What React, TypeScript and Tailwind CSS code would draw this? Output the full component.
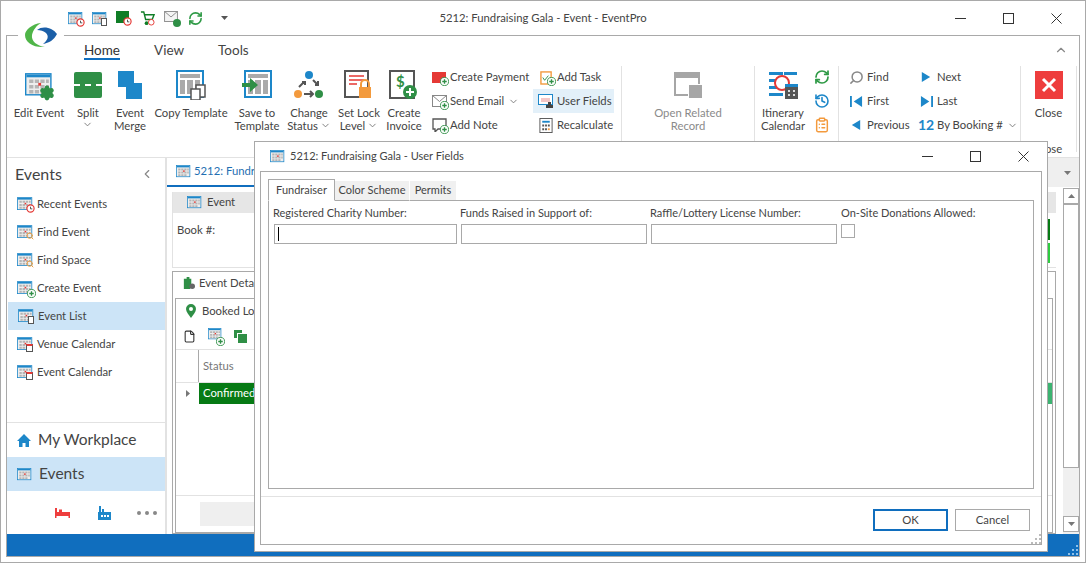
import React from "react";
import { ChevronDown, ChevronUp, ChevronLeft, RefreshCw, History, Search, ClipboardList, File, Settings } from "lucide-react";

function Cal({ size = 20, children }: { size?: number; children?: React.ReactNode }) {
  // small blue framed calendar used all over the app
  return (
    <span className="relative inline-block shrink-0" style={{ width: size, height: size }}>
      <svg viewBox="0 0 20 20" width={size} height={size}>
        <rect x="0.5" y="2" width="18" height="15" fill="#eee" stroke="#1d87c9" />
        <rect x="1" y="2.5" width="17" height="2" fill="#1d87c9" />
        <path d="M3 6h3v2.5H3zM7 6h3v2.5H7zM11 6h3v2.5h-3zM15 6h2v2.5h-2zM3 10h3v2.5H3zM7 10h3v2.5H7zM11 10h3v2.5h-3zM15 10h2v2.5h-2zM3 13.5h3V16H3zM7 13.5h3V16H7zM11 13.5h3V16h-3z" fill="#b5b5b5" />
        <rect x="9.5" y="8.5" width="2" height="2" fill="#e53935" />
      </svg>
      {children}
    </span>
  );
}

function Plus({ className = "" }: { className?: string }) {
  return (
    <svg viewBox="0 0 10 10" className={className} width="9" height="9">
      <circle cx="5" cy="5" r="4.5" fill="#fff" stroke="#2f8f46" />
      <path d="M5 2.5v5M2.5 5h5" stroke="#2f8f46" strokeWidth="1.5" />
    </svg>
  );
}

function Clock({ className = "" }: { className?: string }) {
  return (
    <svg viewBox="0 0 10 10" className={className} width="9" height="9">
      <circle cx="5" cy="5" r="4" fill="#fff" stroke="#e53935" strokeWidth="1.3" />
      <path d="M5 3v2.4h2" stroke="#444" fill="none" />
    </svg>
  );
}

function BigBtn({ label, icon, w }: { label: React.ReactNode; icon: React.ReactNode; w: number }) {
  return (
    <div className="flex flex-col items-center shrink-0 pt-[6px]" style={{ width: w }}>
      <div className="h-[28px] flex items-center justify-center">{icon}</div>
      <div className="mt-[7px] text-center leading-[13px] text-[#444] whitespace-nowrap">{label}</div>
    </div>
  );
}

function SmallBtn({ icon, label, arrow, active, w, pl = 0 }: { icon: React.ReactNode; label: string; arrow?: boolean; active?: boolean; w?: number; pl?: number }) {
  return (
    <div className={"h-[24px] flex items-center gap-[3px] whitespace-nowrap text-[#444] " + (active ? "bg-[#e3f0f9]" : "")} style={{ width: w, paddingLeft: pl }}>
      <span className="w-[16px] h-[16px] flex items-center justify-center shrink-0 relative">{icon}</span>
      {label}
      {arrow && <ChevronDown size={11} className="text-[#777] ml-[1px]" />}
    </div>
  );
}

function Sep() {
  return <div className="w-px bg-[#e2e2e2] h-[75px] shrink-0 mt-[1px]" />;
}

function WinButtons({ box }: { box: number }) {
  return (
    <div className="flex items-center text-[#333]">
      <span className="flex justify-center" style={{ width: box }}><svg width="11" height="11"><path d="M0 5.5h11" stroke="currentColor" /></svg></span>
      <span className="flex justify-center" style={{ width: box }}><svg width="11" height="11"><rect x=".5" y=".5" width="10" height="10" fill="none" stroke="currentColor" /></svg></span>
      <span className="flex justify-center" style={{ width: box }}><svg width="11" height="11"><path d="M.5 .5l10 10M10.5 .5l-10 10" stroke="currentColor" /></svg></span>
    </div>
  );
}

function Grip({ className = "", color = "#bbb" }: { className?: string; color?: string }) {
  return (
    <svg width="10" height="10" className={className}>
      <path d="M8 0h2v2H8zM4 4h2v2H4zM8 4h2v2H8zM0 8h2v2H0zM4 8h2v2H4zM8 8h2v2H8z" fill={color} />
    </svg>
  );
}

const navItems = ["Recent Events", "Find Event", "Find Space", "Create Event", "Event List", "Venue Calendar", "Event Calendar"];

function NavIcon({ name }: { name: string }) {
  return (
    <Cal size={16}>
      {name === "Recent Events" && <Clock className="absolute right-[-2px] bottom-[-1px]" />}
      {(name === "Find Event" || name === "Find Space") && <Search size={8} strokeWidth={3} className="absolute right-[-1px] bottom-0 text-[#f0a040]" />}
      {name === "Create Event" && <Plus className="absolute right-[-3px] bottom-[-2px]" />}
      {name === "Event List" && <span className="absolute right-0 bottom-0 w-[6px] h-[8px] bg-white border border-[#555]" />}
      {(name === "Venue Calendar" || name === "Event Calendar") && <span className="absolute right-0 bottom-0 w-[7px] h-[8px] bg-white border border-[#555] border-t-2 border-t-[#e53935]" />}
    </Cal>
  );
}

export default function App() {
  return (
    <div className="relative w-[1086px] h-[563px] overflow-hidden bg-white border border-[#a9a9a9] text-[11.3px] text-[#444]" style={{ fontFamily: 'Lato, "Liberation Sans", sans-serif' }}>
      {/* title bar */}
      <div className="h-[34px] flex items-center relative">
        <div className="flex items-center gap-[9px] ml-[67px]">
          <Cal size={15}><Clock className="absolute right-[-2px] bottom-[-1px]" /></Cal>
          <Cal size={15}><span className="absolute right-0 bottom-0 w-[6px] h-[8px] bg-white border border-[#555]" /></Cal>
          <span className="relative w-[15px] h-[15px]"><span className="block w-[13px] h-[12px] bg-[#0f7d26]" /><Clock className="absolute right-[-1px] bottom-0" /></span>
          <svg viewBox="0 0 16 16" width="15" height="15"><path d="M1 1h3l2 8h7l2-5H5" fill="none" stroke="#0f7d26" strokeWidth="1.5" /><circle cx="7" cy="13" r="2" fill="#0f7d26" /><circle cx="12" cy="12" r="3" fill="#fff" stroke="#e53935" /></svg>
          <span className="relative w-[15px] h-[15px]"><svg viewBox="0 0 15 12" width="14" height="11"><rect x=".5" y=".5" width="14" height="11" fill="#f4f4f4" stroke="#888" /><path d="M.5 .5l7 6 7-6" fill="none" stroke="#888" /></svg><span className="absolute right-[-2px] bottom-[-1px] w-[8px] h-[8px] rounded-full bg-[#2f8f46]" /></span>
          <RefreshCw size={15} strokeWidth={2.6} className="text-[#2f9a46]" />
          <svg viewBox="0 0 7 4" width="7" height="4" className="ml-[9px]"><path d="M0 0h7L3.5 4z" fill="#555" /></svg>
        </div>
        <div className="absolute left-0 right-0 text-center text-[#444]">5212: Fundraising Gala - Event - EventPro</div>
        <div className="ml-auto pr-[5px]"><WinButtons box={48} /></div>
      </div>

      {/* logo lies over the window frame */}
      <div className="absolute left-[17px] top-[18px] w-[46px] h-[34px] bg-white rounded-full flex items-center justify-center">
        <svg viewBox="0 0 32 28" width="32" height="28">
          <path d="M16 1C7 2 0 8 0 13c0 7 8 13 20 12-8-1-14-6-13-12 1-5 5-10 9-12z" fill="#4fb548" />
          <path d="M12 8c6-5 16-2 20 4-3 6-8 9-14 10 5-4 6-8 3-11-2-2-6-3-9-3z" fill="#1b5fa8" />
        </svg>
      </div>

      {/* main window frame */}
      <div className="mx-[5px] h-[522px] border border-[#a9a9a9] flex flex-col">
        {/* ribbon tabs */}
        <div className="h-[29px] flex items-center relative text-[13.5px] shrink-0">
          <div className="ml-[77px] relative text-[#333]">Home<span className="absolute left-0 right-0 top-[18px] h-[2px] bg-[#106ebe]" /></div>
          <div className="ml-[34px] text-[#444]">View</div>
          <div className="ml-[34px] text-[#444]">Tools</div>
          <ChevronUp size={14} className="absolute right-[11px] top-[7px] text-[#888]" />
        </div>

        {/* ribbon */}
        <div className="h-[92px] shrink-0 flex items-start">
          <BigBtn w={64} label="Edit Event" icon={<Cal size={28}><Settings size={16} strokeWidth={2.4} fill="#2f8f46" className="absolute right-[-2px] bottom-[-2px] text-[#2f8f46]" /></Cal>} />
          <BigBtn w={34} label={<>Split<ChevronDown size={11} className="mx-auto text-[#777]" /></>} icon={<span className="w-[28px] h-[26px] rounded-[2px] bg-[#2f8f46] flex items-center"><span className="w-full border-t-2 border-dashed border-white" /></span>} />
          <BigBtn w={50} label={<>Event<br />Merge</>} icon={<svg viewBox="0 0 24 28" width="24" height="28"><path d="M0 0h16v12h8v16H8V16H0z" fill="#1d87c9" /></svg>} />
          <BigBtn w={72} label="Copy Template" icon={<svg viewBox="0 0 30 30" width="30" height="30"><rect x="1" y="1" width="26" height="26" fill="#fff" stroke="#1d87c9" strokeWidth="2" /><path d="M4 4h20v4H4zM4 10h5v14H4zM11 10h6v14h-6zM19 10h5v14h-5z" fill="#aaa" /><rect x="20" y="15" width="9" height="12" fill="#fff" stroke="#555" strokeWidth="1.5" /><rect x="15" y="19" width="9" height="11" fill="#fff" stroke="#555" strokeWidth="1.5" /></svg>} />
          <BigBtn w={60} label={<>Save to<br />Template</>} icon={<svg viewBox="0 0 30 30" width="30" height="30"><rect x="3" y="1" width="26" height="26" fill="#fff" stroke="#1d87c9" strokeWidth="2" /><path d="M6 4h20v4H6zM6 10h5v14H6zM13 10h6v14h-6zM21 10h5v14h-5z" fill="#aaa" /><path d="M0 13h8V8l8 7-8 7v-5H0z" fill="#2f8f46" /></svg>} />
          <BigBtn w={44} label={<>Change<br /><span className="inline-flex items-center gap-[2px]">Status<ChevronDown size={11} className="text-[#777]" /></span></>} icon={<svg viewBox="0 0 30 30" width="30" height="30"><circle cx="15" cy="5" r="4" fill="#1d87c9" /><circle cx="4" cy="24" r="4" fill="#f39a3d" /><circle cx="25" cy="24" r="4" fill="#2f8f46" /><path d="M5 17l5-5M8 12h3v3M19 10l5 5M24 11v4h-3M10 24h9M16 21l3 3-3 3" stroke="#555" strokeWidth="2" fill="none" /></svg>} />
          <BigBtn w={56} label={<>Set Lock<br /><span className="inline-flex items-center gap-[2px]">Level<ChevronDown size={11} className="text-[#777]" /></span></>} icon={<svg viewBox="0 0 30 30" width="30" height="30"><rect x="1" y="1" width="23" height="26" fill="#fff" stroke="#555" strokeWidth="2" /><path d="M5 6h15M5 10h15M5 14h8" stroke="#e53935" strokeWidth="1.5" /><rect x="15" y="17" width="12" height="11" fill="#f39a3d" /><path d="M17 17v-3a4 4 0 018 0v3" fill="none" stroke="#f39a3d" strokeWidth="2" /></svg>} />
          <BigBtn w={34} label={<>Create<br />Invoice</>} icon={<svg viewBox="0 0 30 30" width="30" height="30"><rect x="1" y="1" width="24" height="27" fill="#fff" stroke="#555" strokeWidth="2" /><text x="7" y="17" fontSize="15" fontWeight="700" fill="#2f8f46">$</text><circle cx="21" cy="22" r="7" fill="#2f8f46" /><path d="M21 18v8M17 22h8" stroke="#fff" strokeWidth="2" /></svg>} />
          <div className="flex flex-col w-[112px] shrink-0">
            <SmallBtn pl={10} label="Create Payment" icon={<><span className="block w-[14px] h-[11px] bg-[#e53935]" /><Plus className="absolute right-[-2px] bottom-[-1px]" /></>} />
            <SmallBtn pl={10} label="Send Email" arrow icon={<><svg viewBox="0 0 15 12" width="15" height="12"><rect x=".5" y=".5" width="14" height="11" fill="#fff" stroke="#888" /><path d="M.5 .5l7 6 7-6" fill="none" stroke="#888" /></svg><Plus className="absolute right-[-2px] bottom-[-1px]" /></>} />
            <SmallBtn pl={10} label="Add Note" icon={<><svg viewBox="0 0 15 14" width="15" height="14"><path d="M1 1h13v10H6l-3 3v-3H1z" fill="#fff" stroke="#555" strokeWidth="1.3" /></svg><Plus className="absolute right-[-2px] bottom-[-1px]" /></>} />
          </div>
          <div className="flex flex-col w-[88px] shrink-0">
            <SmallBtn w={81} pl={5} label="Add Task" icon={<><svg viewBox="0 0 14 16" width="13" height="15"><rect x="1" y="2" width="11" height="13" fill="#fff" stroke="#f39a3d" strokeWidth="1.5" /><path d="M3 8l2 3 4-5" stroke="#2f8f46" fill="none" /></svg><Plus className="absolute right-[-2px] bottom-[-1px]" /></>} />
            <SmallBtn w={81} pl={5} active label="User Fields" icon={<svg viewBox="0 0 16 16" width="16" height="16"><rect x=".5" y="1.5" width="14" height="10" fill="#fff" stroke="#1d87c9" /><path d="M3 5h9v4H3z" fill="#f4c7c7" /><path d="M10 9h3v3h2v3H8v-3h2z" fill="#444" /></svg>} />
            <SmallBtn w={81} pl={5} label="Recalculate" icon={<svg viewBox="0 0 14 16" width="14" height="15"><rect x=".5" y=".5" width="13" height="15" fill="#fff" stroke="#555" /><rect x="3" y="3" width="8" height="2" fill="#1d87c9" /><path d="M3 7h2v2H3zM6 7h2v2H6zM9 7h2v2H9zM3 11h2v2H3zM6 11h2v2H6z" fill="#555" /><path d="M9 11h2v2H9z" fill="#f39a3d" /></svg>} />
          </div>
          <Sep />
          <div className="w-[132px] shrink-0 flex flex-col items-center pt-[6px] text-[#8a8a8a]">
            <div className="h-[28px] flex items-center"><svg viewBox="0 0 28 26" width="28" height="26"><path d="M0 0h26v6H0z" fill="#a6a6a6" /><path d="M1 6v17h13" fill="none" stroke="#a6a6a6" strokeWidth="2" /><path d="M25 6v6" stroke="#a6a6a6" strokeWidth="2" /><rect x="15" y="13" width="13" height="13" fill="#a6a6a6" /></svg></div>
            <div className="mt-[7px] text-center leading-[13px]">Open Related<br />Record</div>
          </div>
          <Sep />
          <BigBtn w={56} label={<>Itinerary<br />Calendar</>} icon={<svg viewBox="0 0 30 30" width="30" height="30"><path d="M1 2h14v3H1zM1 9h10v3H1zM1 16h10v3H1zM1 23h14v3H1zM16 2h13v3H16z" fill="#1d87c9" /><circle cx="14" cy="13" r="7" fill="#fff" stroke="#e53935" strokeWidth="2" /><rect x="17" y="14" width="13" height="15" fill="#555" /><rect x="17" y="14" width="13" height="3" fill="#1d87c9" /><path d="M20 20h2v2h-2zM25 20h2v2h-2zM20 24h2v2h-2zM25 24h2v2h-2z" fill="#ddd" /></svg>} />
          <div className="flex flex-col items-center w-[27px] shrink-0 pr-[5px]">
            <span className="h-[24px] flex items-center"><RefreshCw size={16} strokeWidth={2.6} className="text-[#2f9a46]" /></span>
            <span className="h-[24px] flex items-center"><History size={16} strokeWidth={2.4} className="text-[#1d87c9]" /></span>
            <span className="h-[24px] flex items-center"><ClipboardList size={16} strokeWidth={2.2} className="text-[#f39a3d]" /></span>
          </div>
          <Sep />
          <div className="flex flex-col w-[77px] shrink-0">
            <SmallBtn pl={9} label="Find" icon={<Search size={15} strokeWidth={2.4} className="text-[#888] -scale-x-100" />} />
            <SmallBtn pl={9} label="First" icon={<svg viewBox="0 0 14 14" width="13" height="13"><path d="M0 1h2v12H0zM13 1v12L4 7z" fill="#1d87c9" /></svg>} />
            <SmallBtn pl={9} label="Previous" icon={<svg viewBox="0 0 12 14" width="10" height="12"><path d="M11 1v12L1 7z" fill="#1d87c9" /></svg>} />
          </div>
          <div className="flex flex-col w-[104px] shrink-0">
            <SmallBtn pl={2} label="Next" icon={<svg viewBox="0 0 12 14" width="10" height="12"><path d="M1 1v12l10-6z" fill="#1d87c9" /></svg>} />
            <SmallBtn pl={2} label="Last" icon={<svg viewBox="0 0 14 14" width="13" height="13"><path d="M12 1h2v12h-2zM1 1v12l9-6z" fill="#1d87c9" /></svg>} />
            <SmallBtn pl={2} label="By Booking #" arrow icon={<span className="text-[14px] font-bold text-[#1d87c9] leading-none">12</span>} />
          </div>
          <Sep />
          <div className="w-[55px] shrink-0 flex flex-col items-center pt-[6px]">
            <div className="h-[28px] flex items-center"><span className="w-[28px] h-[28px] bg-[#ee3d3d] flex items-center justify-center"><svg width="16" height="16"><path d="M2 2l12 12M14 2L2 14" stroke="#fff" strokeWidth="3" /></svg></span></div>
            <div className="mt-[7px] leading-[13px]">Close</div>
            <div className="mt-[23px] leading-[13px]">Close</div>
          </div>
          <div className="mt-[1px] w-px h-[86px] bg-[#e2e2e2]" />
        </div>

        {/* body */}
        <div className="flex-1 flex min-h-0 border-t border-[#e2e2e2]">
          {/* sidebar */}
          <div className="w-[160px] shrink-0 border-r-2 border-[#e2e2e2] flex flex-col">
            <div className="h-[32px] flex items-center justify-between pl-[8px] pr-[11px] text-[16px] text-[#444]">Events<ChevronLeft size={14} className="text-[#888]" /></div>
            <div className="flex flex-col">
              {navItems.map((n) => (
                <div key={n} className={"h-[28px] flex items-center gap-[4px] pl-[10px] " + (n === "Event List" ? "bg-[#cce4f7] ml-px" : "")}>
                  <NavIcon name={n} />
                  {n}
                </div>
              ))}
            </div>
            <div className="mt-auto border-t border-[#e2e2e2] text-[15.5px]">
              <div className="h-[34px] flex items-center gap-[7px] pl-[10px]"><svg viewBox="0 0 14 13" width="14" height="13"><path d="M7 0l7 7h-2v6H8.500V9h-3v4H2V7H0z" fill="#1d87c9" /></svg>My Workplace</div>
              <div className="h-[34px] flex items-center gap-[7px] pl-[10px] bg-[#cce4f7]"><Cal size={15} />Events</div>
              <div className="h-[43px] flex items-center pl-[48px]">
                <svg viewBox="0 0 15 10" width="15" height="10"><path d="M0 0h2v4h2V1.500h3V4h8v6h-1.500V8h-12v2H0z" fill="#ee3d3d" /></svg>
                <svg viewBox="0 0 13 14" width="13" height="14" className="ml-[28px]"><path d="M1 0h2v6h1V3h2v3l7 0v8H0V6h1z" fill="#1d87c9" /><path d="M3 9h2v2H3zM6 9h2v2H6zM9 9h2v2H9z" fill="#fff" /></svg>
                <svg viewBox="0 0 20 4" width="20" height="4" className="ml-[26px]"><circle cx="2" cy="2" r="2" fill="#888" /><circle cx="10" cy="2" r="2" fill="#888" /><circle cx="18" cy="2" r="2" fill="#888" /></svg>
              </div>
            </div>
          </div>

          {/* document area, mostly covered by the dialog */}
          <div className="flex-1 min-w-0 flex flex-col overflow-hidden">
            <div className="h-[29px] shrink-0 flex bg-white relative">
              <div className="w-[200px] h-[29px] border-b-[2px] border-[#106ebe] flex items-center gap-[3px] pl-[9px] text-[#1f6fb2] whitespace-nowrap"><Cal size={15} />5212: Fundraising Gala</div>
              <div className="flex-1 bg-[#efefef]" />
              <svg viewBox="0 0 7 4" width="7" height="4" className="absolute right-[8px] top-[13px]"><path d="M0 0h7L3.5 4z" fill="#777" /></svg>
            </div>
            <div className="flex-1 flex min-h-0 pl-[5px] pt-px">
              <div className="flex-1 min-w-0 flex flex-col mr-[7px] pt-[4px]">
                <div className="h-[76px] relative shrink-0 border-l border-[#e2e2e2] border-b">
                  <div className="h-[21px] bg-[#e6e6e6] flex items-center gap-[5px] pl-[14px]"><Cal size={15} />Event</div>
                  <div className="pl-[4px] pt-[9px]">Book #:</div>
                  <span className="absolute right-[6px] top-[27px] w-[3px] h-[21px] bg-[#067a14]" />
                  <span className="absolute right-[6px] top-[51px] w-[3px] h-[20px] bg-[#2ecc40]" />
                </div>
                <div className="mt-[3px] flex-1 border border-[#a9a9a9] flex flex-col min-h-0">
                  <div className="h-[26px] flex items-center gap-[4px] pl-[9px] pb-[4px] shrink-0"><svg viewBox="0 0 14 15" width="13" height="14"><path d="M2 3h3V1h3v2h2v8H9v3H2z" fill="#2f8f46" /><circle cx="11" cy="11" r="3" fill="#666" /></svg>Event Details</div>
                  <div className="flex-1 ml-[2px] mr-[2px] border border-[#a9a9a9] flex flex-col">
                    <div className="h-[24px] flex items-center gap-[6px] pl-[10px]"><svg viewBox="0 0 10 14" width="10" height="14"><path d="M5 0a5 5 0 015 5c0 3-3 6-5 9-2-3-5-6-5-9a5 5 0 015-5z" fill="#2f8f46" /><circle cx="5" cy="5" r="2" fill="#fff" /></svg>Booked Locations</div>
                    <div className="h-[26px] flex items-center gap-[12px] pl-[7px]">
                      <File size={13} className="text-[#333]" />
                      <span className="relative"><Cal size={14} /><Plus className="absolute right-[-3px] bottom-[-1px]" /></span>
                      <svg viewBox="0 0 13 13" width="13" height="13"><path d="M0 0h8v3h-5v5H0z" fill="#2f8f46" /><rect x="4" y="4" width="9" height="9" fill="#2f8f46" /></svg>
                    </div>
                    <div className="h-[34px] border-y border-[#e2e2e2] flex"><div className="w-[23px] border-r border-[#a9a9a9]" /><div className="pl-[4px] flex items-center text-[#777]">Status</div></div>
                    <div className="h-[21px] flex relative">
                      <div className="w-[23px] flex items-center justify-center"><svg viewBox="0 0 4 7" width="4" height="7"><path d="M0 0l4 3.5L0 7z" fill="#777" /></svg></div>
                      <div className="flex-1 bg-[#067a14] text-white pl-[4px] flex items-center">Confirmed</div>
                      <div className="absolute right-0 top-0 h-[21px] w-[6px] bg-[#3cb371]" />
                    </div>
                    <div className="flex-1" />
                    <div className="h-[37px] border-t border-[#e2e2e2] pl-[24px] pt-[6px]"><div className="w-[800px] h-[24px] bg-[#efefef]" /></div>
                  </div>
                </div>
              </div>
              <div className="w-[16px] shrink-0 bg-[#f0f0f0] flex flex-col">
                <div className="h-[16px] border border-[#a9a9a9] bg-white flex items-center justify-center shrink-0"><svg viewBox="0 0 7 4" width="7" height="4"><path d="M0 4h7L3.5 0z" fill="#777" /></svg></div>
                <div className="flex-1 bg-white border border-[#a9a9a9]" />
                <div className="h-[16px] mt-[48px] mb-[2px] border border-[#a9a9a9] bg-white flex items-center justify-center shrink-0"><svg viewBox="0 0 7 4" width="7" height="4"><path d="M0 0h7L3.5 4z" fill="#777" /></svg></div>
              </div>
            </div>
          </div>
        </div>

        {/* status bar */}
        <div className="h-[22px] shrink-0 bg-[#106ebe] flex justify-end items-end pr-[1px] pb-[1px]"><Grip color="#8fc0e8" /></div>
      </div>

      {/* dialog sits over the window */}
      <div className="absolute left-[253px] top-[140px] w-[794px] h-[411px] bg-white border border-[#a9a9a9] flex flex-col text-[11px]">
        <div className="h-[29px] shrink-0 flex items-center pl-[15px]">
          <Cal size={15} />
          <span className="ml-[5px]">5212: Fundraising Gala - User Fields</span>
          <div className="ml-auto"><WinButtons box={48} /></div>
        </div>
        <div className="relative flex-1 mx-[5px] mb-[6px] border border-[#a9a9a9] flex flex-col min-h-0">
          <div className="px-[7px] pt-[7px] flex-1 min-h-0 flex flex-col">
            <div className="flex items-end h-[22px] relative z-10 mb-[-1px]">
              <div className="w-[67px] h-[22px] flex items-center justify-center bg-white border border-[#a9a9a9] border-b-white">Fundraiser</div>
              <div className="w-[74px] h-[20px] flex items-center justify-center bg-[#f0f0f0] border-b border-[#a9a9a9]">Color Scheme</div>
              <div className="w-[47px] h-[20px] flex items-center justify-center bg-[#f0f0f0] border-l border-white border-b border-b-[#a9a9a9]">Permits</div>
            </div>
            <div className="flex-1 border border-[#a9a9a9] flex pl-[5px] pt-[4px]">
              <div className="w-[187px] flex flex-col">
                <div className="h-[16px] -ml-px whitespace-nowrap">Registered Charity Number:</div>
                <div className="mt-[3px] w-[183px] h-[20px] border border-[#a9a9a9] flex items-center pl-[3px]"><span className="w-px h-[14px] bg-black" /></div>
              </div>
              <div className="w-[190px] flex flex-col">
                <div className="h-[16px] -ml-px whitespace-nowrap">Funds Raised in Support of:</div>
                <div className="mt-[3px] w-[186px] h-[20px] border border-[#a9a9a9]" />
              </div>
              <div className="w-[190px] flex flex-col">
                <div className="h-[16px] -ml-px whitespace-nowrap">Raffle/Lottery License Number:</div>
                <div className="mt-[3px] w-[186px] h-[20px] border border-[#a9a9a9]" />
              </div>
              <div className="flex flex-col">
                <div className="h-[16px] whitespace-nowrap">On-Site Donations Allowed:</div>
                <div className="mt-[3px] w-[14px] h-[14px] border border-[#a9a9a9]" />
              </div>
            </div>
          </div>
          <div className="mt-[7px] h-[48px] border-t border-[#e2e2e2] flex justify-end gap-[7px] pr-[11px] pt-[12px] shrink-0 text-[11.3px]">
            <div className="w-[75px] h-[22px] border-2 border-[#106ebe] flex items-center justify-center">OK</div>
            <div className="w-[75px] h-[22px] border border-[#a9a9a9] flex items-center justify-center">Cancel</div>
          </div>
          <Grip className="absolute right-0 bottom-0" />
        </div>
      </div>
    </div>
  );
}
